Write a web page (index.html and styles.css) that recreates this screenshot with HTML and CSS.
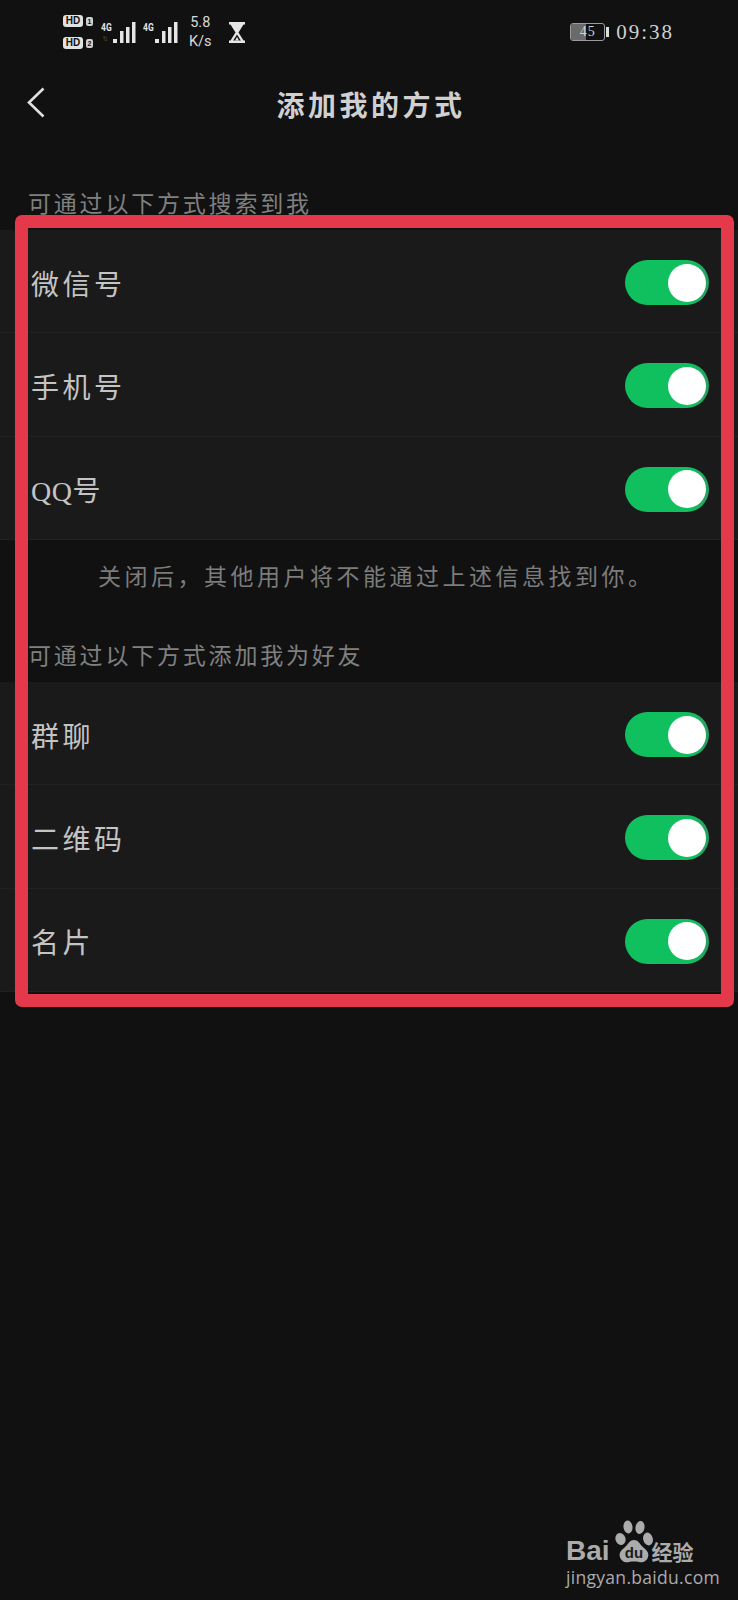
FILE: index.html
```html
<!DOCTYPE html>
<html lang="zh-CN">
<head>
    <meta charset="UTF-8">
    <meta name="viewport" content="width=device-width, initial-scale=1.0">
    <title>添加我的方式</title>
    <link rel="stylesheet" href="styles.css">
</head>
<body>

    <div class="status-bar">
        <div class="status-left">
            <div class="sim-col">
                <div class="sim"><span class="hd">HD</span><span class="sim-no">1</span></div>
                <div class="sim"><span class="hd">HD</span><span class="sim-no">2</span></div>
            </div>
            <div class="net">
                <span class="net-type">4G</span>
                <svg class="bars" width="23" height="21" viewBox="0 0 23 21">
                    <rect x="0" y="17" width="4" height="4"/>
                    <rect x="7" y="9" width="3.5" height="12"/>
                    <rect x="13" y="5" width="3.5" height="16"/>
                    <rect x="19" y="0" width="3.5" height="21"/>
                </svg>
                <span class="net-arrows">↑↓</span>
            </div>
            <div class="net net-two">
                <span class="net-type">4G</span>
                <svg class="bars" width="23" height="21" viewBox="0 0 23 21">
                    <rect x="0" y="17" width="4" height="4"/>
                    <rect x="7" y="9" width="3.5" height="12"/>
                    <rect x="13" y="5" width="3.5" height="16"/>
                    <rect x="19" y="0" width="3.5" height="21"/>
                </svg>
            </div>
            <div class="speed">5.8<br>K/s</div>
            <svg class="hourglass" width="16" height="21" viewBox="0 0 16 21">
                <path d="M0 0h16v2.500h-1.500L9.500 10.500l5 8H16V21H0v-2.500h1.500l5-8-5-8H0z" fill="#e6e6e6"/>
                <path d="M8 12.500l-3.800 6h7.600z" fill="#111"/>
                <path d="M8 15l-2 3.500h4z" fill="#e6e6e6"/>
            </svg>
        </div>
        <div class="status-right">
            <div class="battery">
                <div class="battery-fill"></div>
                <span class="battery-num">45</span>
            </div>
            <div class="battery-nub"></div>
            <div class="clock">09:38</div>
        </div>
    </div>

    <div class="nav">
        <svg class="back" width="18" height="31" viewBox="0 0 18 31">
            <path d="M16.500 1.500L2 15.500l14.500 14" fill="none" stroke="#e0e0e0" stroke-width="2.600"/>
        </svg>
        <div class="nav-title">添加我的方式</div>
    </div>

    <div class="section-title first">可通过以下方式搜索到我</div>
    <div class="group">
        <div class="row"><span class="label">微信号</span><span class="switch"><i class="knob"></i></span></div>
        <div class="row"><span class="label">手机号</span><span class="switch"><i class="knob"></i></span></div>
        <div class="row"><span class="label"><span class="latin">QQ</span>号</span><span class="switch"><i class="knob"></i></span></div>
    </div>

    <p class="note">关闭后，其他用户将不能通过上述信息找到你。</p>

    <div class="section-title">可通过以下方式添加我为好友</div>
    <div class="group">
        <div class="row"><span class="label">群聊</span><span class="switch"><i class="knob"></i></span></div>
        <div class="row"><span class="label">二维码</span><span class="switch"><i class="knob"></i></span></div>
        <div class="row"><span class="label">名片</span><span class="switch"><i class="knob"></i></span></div>
    </div>

    <!-- annotation frame drawn over the list -->
    <div class="red-frame"></div>

    <div class="watermark">
        <div class="wm-top">
            <span class="wm-bai">Bai</span>
            <svg class="wm-paw" width="38" height="44" viewBox="0 0 38 44">
                <ellipse cx="5.500" cy="19" rx="5" ry="6" transform="rotate(-20 5.500 19)"/>
                <ellipse cx="13" cy="7" rx="4.500" ry="6.500" transform="rotate(-8 13 7)"/>
                <ellipse cx="25" cy="7.500" rx="4.500" ry="6.500" transform="rotate(10 25 7.500)"/>
                <ellipse cx="33" cy="19" rx="4.800" ry="6.500" transform="rotate(-15 33 19)"/>
                <path d="M19 20c5 0 6 5 10 8 4 3 5 6 4 9-1 4-5 6-9 5-3-.6-7-.6-10 0-4 1-8-1-9-5-1-3 0-6 4-9 4-3 5-8 10-8z"/>
                <text class="wm-du" x="19" y="38" text-anchor="middle">du</text>
            </svg>
            <span class="wm-jy">经验</span>
        </div>
        <div class="wm-url">jingyan.baidu.com</div>
    </div>

</body>
</html>
```

FILE: styles.css
```css
body {
    margin: 0;
    height: 1600px;
    overflow: hidden;
    position: relative;
    background-color: #111112;
    font-family: "Noto Sans CJK SC", "Liberation Sans", sans-serif;
}

/* status bar */
.status-bar {
    height: 70px;
    box-sizing: border-box;
    padding: 0 64px 6px 63px;
    display: flex;
    justify-content: space-between;
    align-items: center;
    color: #e2e2e2;
}
.status-left, .status-right {
    display: flex;
    align-items: center;
}
.sim-col {
    display: flex;
    flex-direction: column;
    gap: 10px;
}
.sim {
    display: flex;
    align-items: center;
    gap: 3px;
}
.hd {
    width: 20px;
    height: 12px;
    border-radius: 3px;
    background-color: #e2e2e2;
    color: #111;
    font: bold 10px/12px "Liberation Sans", sans-serif;
    text-align: center;
}
.sim-no {
    width: 7px;
    height: 9px;
    border-radius: 2px;
    background-color: #d0d0d0;
    color: #111;
    font: bold 7px/9px "Liberation Sans", sans-serif;
    text-align: center;
}
.net {
    position: relative;
    display: flex;
    width: 35px;
    height: 21px;
    margin-left: 8px;
}
.net-two {
    margin-left: 7px;
}
.net-type {
    font: bold 10px/11px "Roboto", sans-serif;
    width: 12px;
    transform: scaleX(.85);
    transform-origin: left;
}
.bars {
    fill: #e6e6e6;
}
.net-arrows {
    position: absolute;
    left: 1px;
    top: 12px;
    font: 8px/9px "Liberation Sans", sans-serif;
    letter-spacing: -2px;
    color: #666;
}
.speed {
    margin-left: 11px;
    font: 14.500px/19px "Roboto", sans-serif;
    text-align: center;
    color: #d8d8d8;
}
.hourglass {
    margin-left: 17px;
}
.battery {
    position: relative;
    width: 35px;
    height: 18px;
    box-sizing: border-box;
    border: 1px solid #9a9a9a;
    border-radius: 3px;
}
.battery-fill {
    width: 15px;
    height: 100%;
    background-color: #6a6a6a;
}
.battery-num {
    position: absolute;
    left: 0;
    right: 0;
    top: 0;
    text-align: center;
    font: 14px/16px "Liberation Serif", serif;
    letter-spacing: 1px;
    color: #d4d4d4;
}
.battery-nub {
    width: 3px;
    height: 10px;
    margin-left: 1px;
    background-color: #ddd;
}
.clock {
    margin-left: 7px;
    font: 21px/24px "Liberation Serif", serif;
    letter-spacing: 2px;
    color: #cfcfcf;
}

/* title bar */
.nav {
    height: 70px;
    box-sizing: border-box;
    padding-bottom: 2px;
    position: relative;
    display: flex;
    justify-content: center;
    align-items: center;
}
.back {
    position: absolute;
    left: 27px;
    top: 17px;
}
.nav-title {
    font-size: 28px;
    font-weight: 700;
    letter-spacing: 3.500px;
    margin-right: -4px;
    color: #d0d0d0;
}

/* list */
.section-title {
    height: 50px;
    line-height: 44px;
    margin-top: 20px;
    padding-left: 28px;
    font-size: 23px;
    letter-spacing: 2.800px;
    color: #808080;
}
.section-title.first {
    margin-top: 40px;
}
.group {
    background-color: #1a1a1b;
}
.row {
    height: 103.330px;
    box-sizing: border-box;
    padding: 0 29px 0 31px;
    border-bottom: 1px solid #212122;
    display: flex;
    justify-content: space-between;
    align-items: center;
}
.label {
    padding-top: 3px;
    font-size: 28px;
    letter-spacing: 3.500px;
    color: #c4c4c4;
}
.latin {
    font-family: "Liberation Serif", serif;
    letter-spacing: .5px;
}
.switch {
    width: 84px;
    height: 45px;
    margin-top: 3px;
    box-sizing: border-box;
    padding: 3px;
    border-radius: 23px;
    background: linear-gradient(to right, #10c05e 78%, #2a9d63);
    display: flex;
    justify-content: flex-end;
    align-items: center;
}
.knob {
    width: 38px;
    height: 38px;
    border-radius: 50%;
    background-color: #fff;
}
.note {
    margin: 0;
    height: 72px;
    line-height: 70px;
    padding-left: 98px;
    font-size: 23px;
    letter-spacing: 3.500px;
    color: #7c7c7c;
}

/* overlays */
.red-frame {
    position: absolute;
    left: 15px;
    top: 215px;
    width: 719px;
    height: 792px;
    box-sizing: border-box;
    border: 13px solid #e4394a;
    border-radius: 7px;
}
.watermark {
    position: absolute;
    left: 566px;
    top: 1520px;
    width: 132px;
    color: #ababab;
}
.wm-top {
    display: flex;
    align-items: flex-end;
    height: 44px;
}
.wm-bai {
    font: bold 28px/25px "Liberation Sans", sans-serif;
    margin-bottom: 1px;
}
.wm-paw {
    fill: #ababab;
    margin-left: 5px;
    flex: none;
}
.wm-du {
    font: bold 15px "Liberation Sans", sans-serif;
    fill: #1a1a1a;
}
.wm-jy {
    margin-left: -1px;
    font-size: 21px;
    line-height: 24px;
    font-weight: 700;
    white-space: nowrap;
    margin-bottom: 1px;
}
.wm-url {
    margin-top: 3px;
    font: 17.500px/20px "Open Sans", sans-serif;
    white-space: nowrap;
    letter-spacing: .3px;
}
```
